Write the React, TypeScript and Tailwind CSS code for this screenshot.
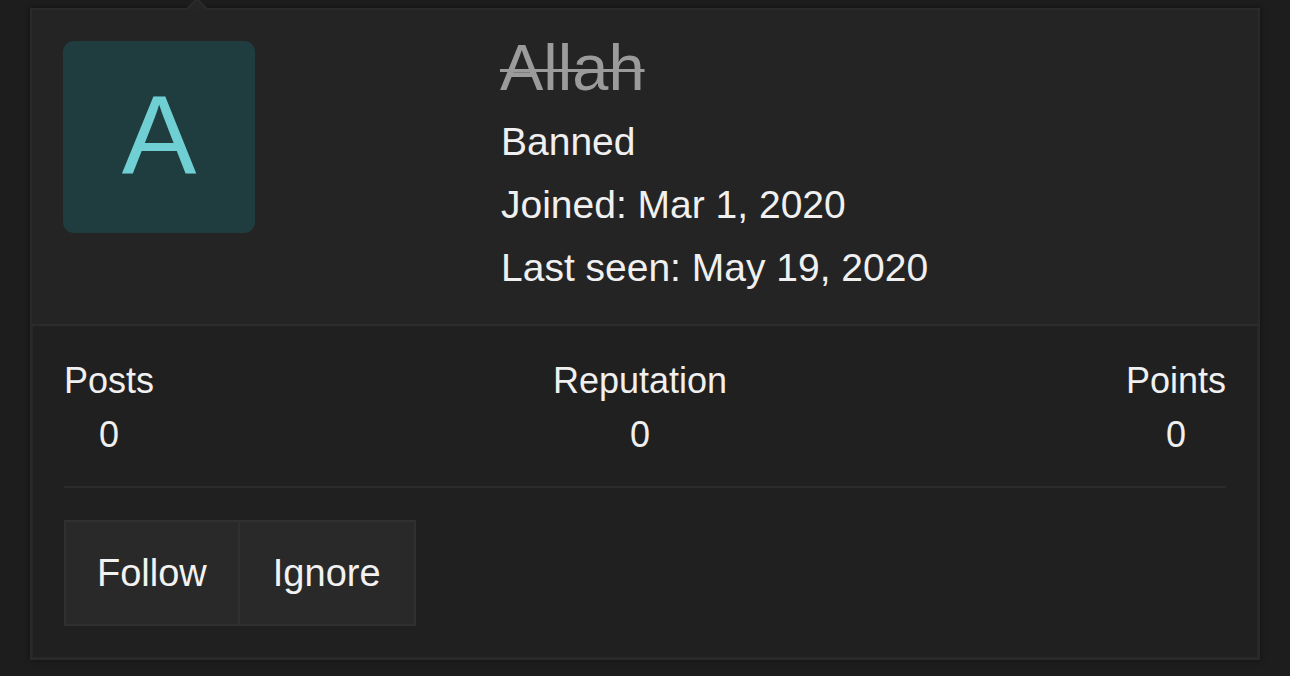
import React from "react";

const stats = [
  { label: "Posts", value: "0" },
  { label: "Reputation", value: "0" },
  { label: "Points", value: "0" },
];

export default function App() {
  return (
    <div
      className="w-[1290px] h-[676px] bg-[#1d1d1d] overflow-hidden px-[30px] pt-[8px]"
      style={{ fontFamily: '"Liberation Sans", Arial, sans-serif' }}
    >
      <div className="relative h-[652px] border-2 border-[#2a2a2a] bg-[#242424] shadow-[0_0_6px_rgba(0,0,0,0.45)] flex flex-col">
        {/* pointer arrow */}
        <div className="absolute -top-[10px] left-[138px] w-[54px] h-[10px] overflow-hidden">
          <div className="w-[36px] h-[36px] bg-[#252525] border-2 border-[#2a2a2a] rotate-45 mx-auto mt-[5px]" />
        </div>

        {/* header */}
        <div className="flex h-[316px] pt-[31px] pl-[31px] border-b-2 border-[#2c2c2c]">
          <div className="w-[192px] h-[192px] rounded-[11px] bg-[#1f3d3f] flex items-center justify-center">
            <span className="text-[#6fcfd2] text-[112px] leading-none -mt-[4px]">A</span>
          </div>
          <div className="ml-[246px] flex flex-col text-[#f0f0f0] text-[39px] leading-[63px]">
            <span className="text-[65px] leading-[62px] text-[#9b9b9b] line-through decoration-[3px] -ml-[1px] -mt-[4px]">
              Allah
            </span>
            <span className="mt-[11px]">Banned</span>
            <span>Joined: Mar 1, 2020</span>
            <span>Last seen: May 19, 2020</span>
          </div>
        </div>

        {/* lower */}
        <div className="flex-1 bg-[#202020] border-x border-b border-[#272727] px-[31px] pt-[28px]">
          <div className="flex justify-between text-[#f0f0f0] text-[36px] leading-[54px] pb-[24px] border-b-2 border-[#2b2b2b]">
            {stats.map((s) => (
              <div key={s.label} className="flex flex-col items-center">
                <span>{s.label}</span>
                <span>{s.value}</span>
              </div>
            ))}
          </div>
          <div className="flex mt-[32px]">
            <button className="h-[106px] px-[31px] bg-[#292929] border-2 border-[#303030] text-[#f2f2f2] text-[38px]">
              Follow
            </button>
            <button className="h-[106px] px-[33px] bg-[#292929] border-2 border-l-0 border-[#303030] text-[#f2f2f2] text-[38px]">
              Ignore
            </button>
          </div>
        </div>
      </div>
    </div>
  );
}
